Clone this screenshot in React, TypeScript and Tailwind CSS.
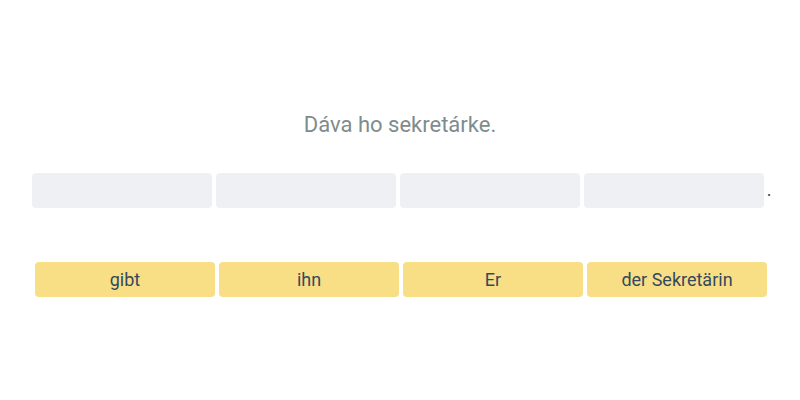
import React from "react";

export default function App() {
  const words = ["gibt", "ihn", "Er", "der Sekretärin"];
  return (
    <div
      className="w-[800px] h-[400px] bg-white flex flex-col items-center pt-[111px]"
      style={{ fontFamily: "Roboto, 'Noto Sans', sans-serif" }}
    >
      <div className="text-[22px] leading-[28px] text-[#7f8c8d]">Dáva ho sekretárke.</div>
      <div className="mt-[34px] flex items-center gap-[4px] ml-[3px]">
        {[0, 1, 2, 3].map((i) => (
          <div key={i} className="w-[180px] h-[35px] rounded-[4px] bg-[#eff0f4]" />
        ))}
        <span className="text-[18px] leading-[24px] text-[#34495e] ml-[-1px] mt-[-2px]">.</span>
      </div>
      <div className="mt-[54px] flex gap-[4px] ml-[2px]">
        {words.map((w) => (
          <div
            key={w}
            className="w-[180px] h-[35px] rounded-[4px] bg-[#f8df86] flex items-center justify-center text-[18px] text-[#34495e]"
          >
            {w}
          </div>
        ))}
      </div>
    </div>
  );
}
